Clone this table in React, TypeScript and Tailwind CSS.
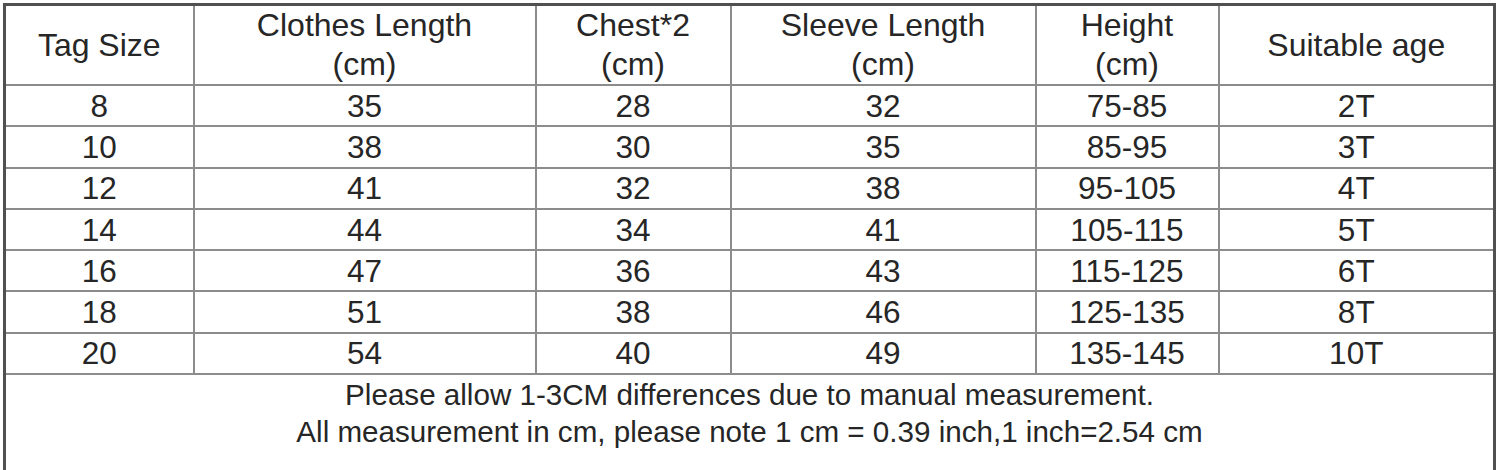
import React from "react";

const headers: string[][] = [
  ["Tag Size"],
  ["Clothes Length", "(cm)"],
  ["Chest*2", "(cm)"],
  ["Sleeve Length", "(cm)"],
  ["Height", "(cm)"],
  ["Suitable age"],
];

const rows: string[][] = [
  ["8", "35", "28", "32", "75-85", "2T"],
  ["10", "38", "30", "35", "85-95", "3T"],
  ["12", "41", "32", "38", "95-105", "4T"],
  ["14", "44", "34", "41", "105-115", "5T"],
  ["16", "47", "36", "43", "115-125", "6T"],
  ["18", "51", "38", "46", "125-135", "8T"],
  ["20", "54", "40", "49", "135-145", "10T"],
];

const widths = ["w-[189px]", "w-[342px]", "w-[195px]", "w-[305px]", "w-[183px]", "w-[276px]"];

export default function App() {
  return (
    <div className="w-[1500px] h-[470px] overflow-hidden bg-white pt-[3px] pl-[3px] text-[#262626] [font-family:'Liberation_Sans',Arial,sans-serif]">
      <table className="table-fixed border-collapse border-[3px] border-[#505050] w-[1493px]">
        <colgroup>
          {widths.map((w, i) => (
            <col key={i} className={w} />
          ))}
        </colgroup>
        <thead>
          <tr className="h-[80px]">
            {headers.map((h, i) => (
              <th
                key={i}
                className="border-2 border-[#8c8c8c] font-normal text-[32px] leading-[39px] text-center align-middle p-0"
              >
                {h.map((line, j) => (
                  <div key={j}>{line}</div>
                ))}
              </th>
            ))}
          </tr>
        </thead>
        <tbody>
          {rows.map((r, i) => (
            <tr key={i} className="h-[41.3px]">
              {r.map((c, j) => (
                <td
                  key={j}
                  className="border-2 border-[#8c8c8c] text-[31.5px] leading-[36px] text-center align-middle p-0"
                >
                  {c}
                </td>
              ))}
            </tr>
          ))}
          <tr className="h-[120px]">
            <td
              colSpan={6}
              className="border-2 border-[#8c8c8c] text-[29.6px] leading-[37px] text-center align-top pt-[1px]"
            >
              <div>Please allow 1-3CM differences due to manual measurement.</div>
              <div>All measurement in cm, please note 1 cm = 0.39 inch,1 inch=2.54 cm</div>
            </td>
          </tr>
        </tbody>
      </table>
    </div>
  );
}
